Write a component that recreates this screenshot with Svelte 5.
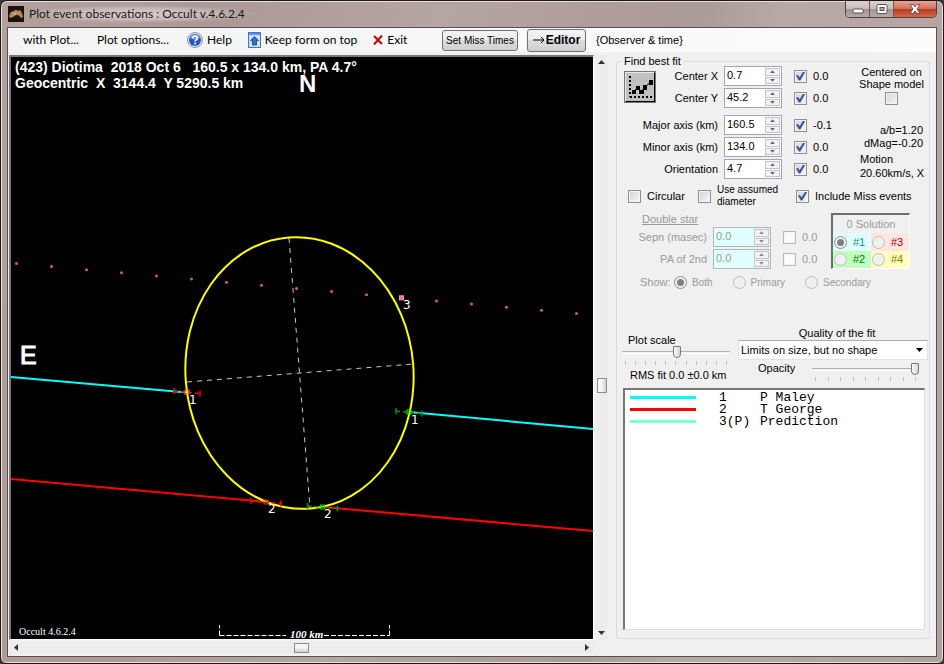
<script lang="ts">
  // Event plot window: sky-plane plot on the left, fit controls and chord list on the right.
  type Param = { id: string; label: string; value: string; fit: string };

  const centre: Param[] = [
    { id: 'cx', label: 'Center X', value: '0.7', fit: '0.0' },
    { id: 'cy', label: 'Center Y', value: '45.2', fit: '0.0' },
  ];
  const shape: Param[] = [
    { id: 'major', label: 'Major axis (km)', value: '160.5', fit: '-0.1' },
    { id: 'minor', label: 'Minor axis (km)', value: '134.0', fit: '0.0' },
    { id: 'orient', label: 'Orientation', value: '4.7', fit: '0.0' },
  ];
  const double: Param[] = [
    { id: 'sepn', label: 'Sepn (masec)', value: '0.0', fit: '0.0' },
    { id: 'pa2', label: 'PA of 2nd', value: '0.0', fit: '0.0' },
  ];

  const chords = [
    { id: '1', name: 'P Maley', color: '#00ffff' },
    { id: '2', name: 'T George', color: '#ff0000' },
    { id: '3(P)', name: 'Prediction', color: '#7fffd4' },
  ];

  // predicted path, one dot per time step
  const dots = Array.from({ length: 17 }, (_, i) => ({ x: 16.5 + 35 * i, y: 263.5 + 3.12 * i }));

  const events = [
    { x: 187, y: 392, half: 13, bar: '#ff0000', box: '#ff7040', label: '1', lx: 189, ly: 404 },
    { x: 266, y: 502, half: 15, bar: '#ff0000', box: '#d04020', label: '2', lx: 268, ly: 513 },
    { x: 409, y: 412, half: 13, bar: '#1a8a1a', box: '#00ff00', label: '1', lx: 411, ly: 424 },
    { x: 322.5, y: 507, half: 15, bar: '#1a8a1a', box: '#00e000', label: '2', lx: 324, ly: 518 },
  ];

  const solutions = ['#1', '#3', '#2', '#4'];
  const shows = ['Both', 'Primary', 'Secondary'];

  let solution = $state('#1');
  let show = $state('Both');
  let plotScale = $state(51);
  let opacity = $state(100);
  let hPos = $state(50);
  let vPos = $state(57);
</script>

{#snippet paramRow(p: Param, disabled: boolean)}
  <label class="name" for={p.id}>{p.label}</label>
  <div class="spinner">
    <input id={p.id} type="text" value={p.value} {disabled} />
    <span class="arrows">
      <button type="button" class="up" aria-label="Increase {p.label}" {disabled}></button>
      <button type="button" class="down" aria-label="Decrease {p.label}" {disabled}></button>
    </span>
  </div>
  <label class="check">
    <input type="checkbox" checked={!disabled} {disabled} />
    <span>{p.fit}</span>
  </label>
{/snippet}

<div class="window">
  <header class="titlebar">
    <svg class="app-icon" viewBox="0 0 16 16" aria-hidden="true">
      <rect width="16" height="16" fill="#1c130e" />
      <path d="M1 10 L3 6 L6 5 L8 3.500 L10 5 L12 4 L14 7 L15 11 L13 12 L11 9.500 L8 9 L5 11 L2 12 Z" fill="#b08a60" />
      <path d="M4 8 L7 6 L9 8 L7 9 Z" fill="#caa67c" />
    </svg>
    <h1>Plot event observations : Occult v.4.6.2.4</h1>
    <div class="caption">
      <button type="button" aria-label="Minimize">
        <svg viewBox="0 0 12 10"><rect x="1" y="5" width="10" height="4" rx="1" fill="#fff" stroke="#555" /></svg>
      </button>
      <button type="button" aria-label="Maximize">
        <svg viewBox="0 0 12 10">
          <rect x="1" y="0.500" width="10" height="9" rx="1" fill="#fff" stroke="#555" />
          <rect x="4" y="3.500" width="4" height="3" fill="#aaa" stroke="#555" />
        </svg>
      </button>
      <button type="button" class="close" aria-label="Close">
        <svg viewBox="0 0 12 10">
          <path d="M1 0.500 H4 L6 3 L8 0.500 H11 L8 5 L11 9.500 H8 L6 7 L4 9.500 H1 L4 5 Z" fill="#fff" stroke="#5b3a3a" stroke-width="0.800" />
        </svg>
      </button>
    </div>
  </header>

  <div class="client">
    <nav class="toolbar">
      <button type="button" class="item">with Plot...</button>
      <button type="button" class="item">Plot options...</button>
      <button type="button" class="item help">
        <svg viewBox="0 0 16 16" width="16" height="16" aria-hidden="true">
          <circle cx="8" cy="8" r="7.500" fill="#dfe3ea" stroke="#8d97a8" />
          <circle cx="8" cy="8" r="6" fill="#2456c4" />
          <path d="M3 6 A5.500 5.500 0 0 1 13 6 Q8 9 3 6" fill="#6f9cf0" />
          <path d="M5.700 6.200 Q5.800 4 8 4 Q10.300 4 10.300 6 Q10.300 7.200 9 8 Q8.100 8.600 8.100 9.600" fill="none" stroke="#fff" stroke-width="1.600" />
          <rect x="7.300" y="10.700" width="1.700" height="1.700" fill="#fff" />
        </svg>
        Help
      </button>
      <button type="button" class="item keep">
        <svg viewBox="0 0 13 16" width="13" height="16" aria-hidden="true">
          <rect x="0.500" y="0.500" width="12" height="15" fill="#cfe2fb" stroke="#3f74c6" />
          <rect x="1" y="1" width="11" height="2" fill="#5b93e8" />
          <path d="M6.500 4.500 L10.500 8.500 H8.500 V13 H4.500 V8.500 H2.500 Z" fill="#2f6fd8" stroke="#1c3f8c" stroke-width="0.800" />
        </svg>
        Keep form on top
      </button>
      <button type="button" class="item exit">
        <svg viewBox="0 0 10 10" width="10" height="10" aria-hidden="true">
          <path d="M1 1 L9 9 M9 0.500 L1 9.500" stroke="#c80000" stroke-width="2" fill="none" />
        </svg>
        Exit
      </button>
      <button type="button" class="push miss">Set Miss Times</button>
      <button type="button" class="push editor">
        <svg viewBox="0 0 12 8" width="12" height="8" aria-hidden="true">
          <path d="M0 4 H11 M8 1 L11 4 L8 7" stroke="#000" fill="none" />
        </svg>Editor
      </button>
      <span class="hint">{'{Observer & time}'}</span>
    </nav>

    <main>
      <section class="plot-area">
        <svg class="plot" viewBox="11 57 582 582" role="img" aria-label="Observed chords and fitted ellipse">
          <g class="head">
            <text x="15" y="72">(423) Diotima  2018 Oct 6   160.5 x 134.0 km, PA 4.7°</text>
            <text x="15" y="88">Geocentric  X  3144.4  Y 5290.5 km</text>
          </g>
          <text class="north" x="299" y="92">N</text>
          <text class="east" x="20" y="364">E</text>

          {#each dots as d, i}
            {#if i === 11}
              <rect x={d.x - 2} y={d.y - 2} width="4" height="4" fill="#ff69b4" stroke="#e0a0d0" />
            {:else}
              <circle cx={d.x} cy={d.y} r="1.500" fill="#d8509a" />
            {/if}
          {/each}
          <text class="tag" x="403" y="309">3</text>

          <g stroke-width="2">
            <path d="M11 377 L187 392.500 M409 412 L593 429" stroke="#00ffff" />
            <path d="M11 479 L267 502 M323 507 L593 531" stroke="#ff0000" />
          </g>

          <g class="axes">
            <path d="M289 238 L310 508" />
            <path d="M187 382 L413 364" />
          </g>
          <ellipse cx="299.500" cy="373" rx="114" ry="136" transform="rotate(-4.7 299.5 373)" />

          {#each events as e}
            <g stroke={e.bar} fill="none">
              <path
                d="M{e.x - e.half} {e.y - 1} L{e.x + e.half} {e.y + 1.5}"
                stroke-dasharray="4 3"
                stroke-width="1.500"
              />
              <path
                d="M{e.x - e.half} {e.y - 4} v6 M{e.x + e.half} {e.y - 1.5} v6"
                stroke-width="1.500"
              />
              <rect x={e.x - 2} y={e.y - 2} width="4" height="4" stroke={e.box} />
            </g>
            <text class="tag" x={e.lx} y={e.ly}>{e.label}</text>
          {/each}

          <text class="version" x="19" y="635">Occult 4.6.2.4</text>
          <path class="bar" d="M219.500 635.500 H286 M324 635.500 H389.500 M219.500 635.500 V625 M389.500 635.500 V625" />
          <text class="km" x="290" y="638">100 km</text>
        </svg>
        <div class="scroll vertical">
          <button type="button" class="tip t-up" aria-label="Scroll up"></button>
          <input type="range" bind:value={vPos} aria-label="Vertical position" />
          <button type="button" class="tip t-down" aria-label="Scroll down"></button>
        </div>
        <div class="scroll horizontal">
          <button type="button" class="tip t-left" aria-label="Scroll left"></button>
          <input type="range" bind:value={hPos} aria-label="Horizontal position" />
          <button type="button" class="tip t-right" aria-label="Scroll right"></button>
        </div>
      </section>

      <fieldset class="panel">
        <legend>Find best fit</legend>

        <div class="fit">
          <div class="params">
            <div class="centre">
              <button type="button" class="fit-button" aria-label="Find best fit">
                <svg viewBox="0 0 28 28" aria-hidden="true">
                  <path d="M4 3 V24" stroke="#000" stroke-width="2" stroke-dasharray="2 2" />
                  <path d="M4 24 H27" stroke="#000" stroke-width="2" stroke-dasharray="2 2" />
                  <path d="M7 19 L11 15 L15 19 L20 13 L25 9" stroke="#000" fill="none" />
                  <path d="M6 17h4v4h-4z M10 13h4v4h-4z M13 17h5v4h-5z M17 12h4v5h-4z M23 7h4v5h-4z" />
                </svg>
              </button>
              <div class="rows">
                {#each centre as p (p.id)}
                  {@render paramRow(p, false)}
                {/each}
              </div>
            </div>
            <div class="rows">
              {#each shape as p (p.id)}
                {@render paramRow(p, false)}
              {/each}
            </div>
          </div>
          <div class="facts">
            <label class="model">
              <span>Centered on<br />Shape model</span>
              <input type="checkbox" />
            </label>
            <p class="ratio">a/b=1.20<br />dMag=-0.20</p>
            <p class="motion">Motion<br />20.60km/s, X</p>
          </div>
        </div>

        <div class="options">
          <label class="check circular"><input type="checkbox" /><span>Circular</span></label>
          <label class="check assumed"><input type="checkbox" /><span>Use assumed<br />diameter</span></label>
          <label class="check"><input type="checkbox" checked /><span>Include Miss events</span></label>
        </div>

        <div class="double">
          <div>
            <h2>Double star</h2>
            <div class="rows">
              {#each double as p (p.id)}
                {@render paramRow(p, true)}
              {/each}
            </div>
          </div>
          <div class="solutions">
            <p>0 Solution</p>
            {#each solutions as s, i}
              <label class="s{i}">
                <input type="radio" name="solution" value={s} bind:group={solution} disabled />{s}
              </label>
            {/each}
          </div>
        </div>

        <div class="show">
          <span>Show:</span>
          {#each shows as s}
            <label><input type="radio" name="show" value={s} bind:group={show} disabled />{s}</label>
          {/each}
        </div>

        <div class="tuning">
          <div class="scale">
            <label for="scale">Plot scale</label>
            <input id="scale" class="slider" type="range" bind:value={plotScale} />
            <div class="ticks">{#each Array(11) as _}<i></i>{/each}</div>
            <p>RMS fit 0.0 ±0.0 km</p>
          </div>
          <div class="quality">
            <label for="quality">Quality of the fit</label>
            <div class="select">
              <select id="quality">
                <option>Limits on size, but no shape</option>
              </select>
            </div>
            <div class="opacity">
              <label for="opacity">Opacity</label>
              <div>
                <input id="opacity" class="slider" type="range" bind:value={opacity} />
                <div class="ticks">{#each Array(9) as _}<i></i>{/each}</div>
              </div>
            </div>
          </div>
        </div>

        <div class="list">
          <table>
            <tbody>
              {#each chords as c (c.id)}
                <tr>
                  <td class="swatch"><i style="background: {c.color}"></i></td>
                  <td class="num">{c.id}</td>
                  <td>{c.name}</td>
                </tr>
              {/each}
            </tbody>
          </table>
        </div>
      </fieldset>
    </main>
  </div>
</div>

<style>
  :global(body) {
    margin: 0;
    background: #3a3a3a;
  }
  * {
    box-sizing: border-box;
  }
  button,
  input,
  select {
    margin: 0;
    padding: 0;
    font: inherit;
    color: inherit;
  }
  p,
  h1,
  h2 {
    margin: 0;
    font-weight: 400;
  }

  .window {
    display: flex;
    flex-direction: column;
    min-height: 100vh;
    padding: 0 6px 6px;
    border: 1px solid #1d1718;
    border-radius: 7px 7px 6px 6px;
    background: linear-gradient(100deg, #b3a19e 0%, #ab9996 20%, #b6a6a3 42%, #ad9c99 60%, #ab9b98 66%, #b9a9a6 74%, #b3a3a0 100%);
    box-shadow: inset 0 0 0 1px #e9e0df;
    font: 11px/13px 'Liberation Sans', Arial, sans-serif;
    color: #000;
  }
  .titlebar {
    display: flex;
    align-items: center;
    height: 26px;
    padding-left: 1px;
  }
  .app-icon {
    width: 16px;
    height: 16px;
  }
  .titlebar h1 {
    padding: 0 12px 0 5px;
    background: radial-gradient(closest-side, rgba(255, 255, 255, 0.5), rgba(255, 255, 255, 0.3) 60%, transparent);
    font: 12px/18px Lato, 'Open Sans', sans-serif;
    color: #1c1414;
  }
  .caption {
    display: flex;
    align-self: flex-start;
    margin-left: auto;
    border: 1px solid #4b3f40;
    border-top: 0;
    border-radius: 0 0 5px 5px;
    overflow: hidden;
  }
  .caption button {
    display: grid;
    place-items: center;
    width: 24px;
    height: 16px;
    border: 0;
    border-right: 1px solid #6b5c5c;
    background: linear-gradient(#dcd2d1, #c9bdbb 48%, #a39290 50%, #b8a9a7);
  }
  .caption .close {
    width: 42px;
    border-right: 0;
    background: linear-gradient(#e6a596, #d0705c 48%, #b93a22 50%, #d4684a);
  }
  .caption svg {
    width: 12px;
    height: 10px;
  }

  .client {
    flex: 1;
    display: flex;
    flex-direction: column;
    border: 1px solid #5c4e4e;
    background: #f0f0f0;
  }
  .toolbar {
    display: flex;
    align-items: center;
    height: 24px;
    padding-left: 15px;
    background: linear-gradient(90deg, #f3f3f3, #fcfcfc);
  }
  .item {
    display: flex;
    align-items: center;
    gap: 4px;
    margin-right: 18px;
    border: 0;
    background: none;
    font: 12px/18px Lato, 'Open Sans', sans-serif;
    white-space: nowrap;
  }
  .item.help,
  .item.keep {
    margin-right: 16px;
  }
  .item.exit {
    margin-right: auto;
  }
  .push {
    border: 1px solid #707070;
    border-radius: 3px;
    background: linear-gradient(#f4f4f4, #ebebeb 48%, #dcdcdc 50%, #cfcfcf);
    white-space: nowrap;
  }
  .miss {
    width: 76px;
    height: 21px;
    margin-right: 9px;
    font-size: 10px;
  }
  .editor {
    display: flex;
    align-items: center;
    justify-content: center;
    gap: 1px;
    width: 59px;
    height: 23px;
    font-size: 12px;
    font-weight: 700;
  }
  .hint {
    width: 350px;
    padding-left: 10px;
  }

  main {
    flex: 1;
    display: flex;
    gap: 9px;
    padding: 3px 6px 3px 1px;
  }
  .plot-area {
    flex: 1;
    display: grid;
    grid-template-columns: minmax(0, 1fr) 11px;
    grid-template-rows: auto 11px;
    gap: 2px;
    align-content: start;
  }
  .plot {
    display: block;
    width: 100%;
    border: 2px solid #777;
    border-right: 1px solid #fff;
    border-bottom: 1px solid #fff;
    background: #000;
  }
  .plot text {
    fill: #fff;
    white-space: pre;
  }
  .head {
    font: 700 14px 'Liberation Sans', Arial, sans-serif;
  }
  .north {
    font: 700 24px 'Liberation Sans', Arial, sans-serif;
  }
  .east {
    font: 25px 'Liberation Sans', Arial, sans-serif;
    stroke: #fff;
  }
  .tag {
    font: 12px 'DejaVu Sans', sans-serif;
  }
  .version {
    font: 10px 'Liberation Serif', serif;
  }
  .km {
    font: italic 700 11px 'Liberation Serif', serif;
  }
  .bar {
    fill: none;
    stroke: #fff;
    stroke-dasharray: 5 2;
  }
  .axes {
    fill: none;
    stroke: #d8ce86;
    stroke-dasharray: 5 5;
  }
  ellipse {
    fill: none;
    stroke: #ffff00;
    stroke-width: 2;
  }

  .scroll {
    display: flex;
    background: #ececec;
  }
  .scroll.vertical {
    flex-direction: column;
  }
  .scroll input {
    flex: 1;
    min-width: 0;
    min-height: 0;
    appearance: none;
    background: transparent;
  }
  .vertical input {
    width: 11px;
    writing-mode: vertical-lr;
  }
  .scroll input::-webkit-slider-thumb {
    appearance: none;
    width: 15px;
    height: 10px;
    border: 1px solid #8e8e8e;
    background: linear-gradient(#f6f6f6 45%, #cfcfd2);
  }
  .vertical input::-webkit-slider-thumb {
    width: 10px;
    height: 15px;
    background: linear-gradient(90deg, #f6f6f6 45%, #cfcfd2);
  }
  .tip {
    display: grid;
    place-items: center;
    width: 11px;
    height: 14px;
    border: 0;
    background: none;
  }
  .horizontal .tip {
    width: 14px;
    height: 11px;
  }
  .tip::before {
    content: '';
    width: 7px;
    height: 4px;
    background: #333;
  }
  .t-up::before {
    clip-path: polygon(50% 0, 100% 100%, 0 100%);
  }
  .t-down::before {
    clip-path: polygon(0 0, 100% 0, 50% 100%);
  }
  .t-left::before,
  .t-right::before {
    width: 4px;
    height: 7px;
  }
  .t-left::before {
    clip-path: polygon(100% 0, 100% 100%, 0 50%);
  }
  .t-right::before {
    clip-path: polygon(0 0, 100% 50%, 0 100%);
  }

  .panel {
    display: flex;
    flex-direction: column;
    width: 314px;
    min-width: 0;
    margin: 1px 0 14px;
    padding: 0 0 8px;
    border: 1px solid #d3dde6;
    border-radius: 3px;
  }
  legend {
    margin-left: 5px;
    padding: 0 2px;
    line-height: 10px;
  }
  .fit {
    display: flex;
    justify-content: space-between;
    padding: 0 6px 0 7px;
  }
  .rows {
    display: grid;
    grid-template-columns: 94px 58px auto;
    grid-auto-rows: 20px;
    align-items: center;
    justify-content: start;
    column-gap: 6px;
    row-gap: 2px;
  }
  .params > .rows {
    margin-top: 7px;
  }
  .name {
    text-align: right;
    white-space: nowrap;
  }
  /* the icon button shares one cell with the label column beside it */
  .centre {
    display: grid;
  }
  .centre > * {
    grid-area: 1 / 1;
  }
  .fit-button {
    z-index: 1;
    align-self: center;
    width: 32px;
    height: 32px;
    border: 2px outset #e8e8e8;
    border-right-color: #555;
    border-bottom-color: #555;
    background: #c0c0c0;
    outline: 1px solid #777;
    outline-offset: -1px;
  }
  .fit-button svg {
    display: block;
    width: 28px;
    height: 28px;
  }
  .spinner {
    display: flex;
    height: 20px;
    border: 1px solid #a3a7ad;
    background: #fff;
  }
  .spinner input {
    width: 40px;
    height: 16px;
    padding-left: 2px;
    border: 0;
    background: transparent;
  }
  .arrows {
    display: grid;
    gap: 1px;
    width: 15px;
    margin: 1px 1px 1px auto;
  }
  .arrows button {
    display: grid;
    place-items: center;
    border: 1px solid #c4c4c8;
    background: #f2f2f2;
  }
  .arrows button::before {
    content: '';
    width: 5px;
    height: 3px;
    background: #4c5f9e;
    clip-path: polygon(50% 0, 100% 100%, 0 100%);
  }
  .arrows .down::before {
    clip-path: polygon(0 0, 100% 0, 50% 100%);
  }
  .check {
    display: flex;
    align-items: center;
    gap: 6px;
    white-space: nowrap;
  }
  .rows .check {
    padding-left: 6px;
  }
  input[type='checkbox'] {
    appearance: none;
    flex: none;
    display: grid;
    place-items: center;
    width: 13px;
    height: 13px;
    border: 1px solid #8e8f8f;
    background: linear-gradient(135deg, #cfd3d8, #f6f6f6);
    box-shadow: inset 0 0 0 1px #f4f4f4;
  }
  input[type='checkbox']:checked::before {
    content: '';
    width: 9px;
    height: 9px;
    background: #3c549a;
    clip-path: polygon(0 45%, 22% 38%, 40% 65%, 80% 0, 100% 8%, 48% 100%, 32% 100%);
  }
  .facts {
    display: flex;
    flex-direction: column;
    width: 63px;
    white-space: nowrap;
  }
  .model {
    display: flex;
    flex-direction: column;
    align-items: center;
    gap: 2px;
    line-height: 12px;
    text-align: center;
  }
  .ratio {
    margin-top: 19px;
    text-align: right;
  }
  .motion {
    margin-top: 2px;
    line-height: 14px;
  }

  .options {
    display: flex;
    height: 24px;
    margin-top: 4px;
    padding-left: 11px;
  }
  .circular {
    width: 70px;
  }
  .assumed {
    width: 98px;
    font-size: 10px;
    line-height: 12px;
  }

  .double {
    display: flex;
    justify-content: space-between;
    margin-top: 5px;
    padding-right: 19px;
    color: #9a9a9a;
  }
  h2 {
    margin-bottom: 2px;
    padding-left: 25px;
    font-size: 11px;
    line-height: 12px;
    text-decoration: underline;
  }
  .double .rows {
    grid-template-columns: 90px 58px auto;
  }
  .double .spinner {
    border-color: #b4b4b4;
    background: linear-gradient(90deg, #e0ffff 42px, #f0f0f0 42px);
  }
  .double .arrows button::before {
    background: #888;
  }
  .double input[type='checkbox'] {
    border-color: #b8b8b8;
    background: #fbfbfb;
  }
  .solutions {
    display: grid;
    grid-template-columns: 1fr 1fr;
    grid-template-rows: 1fr 18px 17px;
    width: 79px;
    height: 56px;
    border: 2px solid #6d6d6d;
    border-right: 1px solid #fff;
    border-bottom: 1px solid #fff;
  }
  .solutions p {
    grid-column: 1 / 3;
    align-self: center;
    text-align: center;
  }
  .solutions label {
    display: flex;
    align-items: center;
    gap: 6px;
    padding-left: 1px;
  }
  .s0 {
    background: #e0ffff;
    color: #009a9a;
  }
  .s1 {
    background: #ffe4e1;
    color: #b00000;
  }
  .s2 {
    background: #c0ffc0;
    color: #008000;
  }
  .s3 {
    background: #ffffc0;
    color: #808000;
  }
  input[type='radio'] {
    appearance: none;
    flex: none;
    display: grid;
    place-items: center;
    width: 13px;
    height: 13px;
    border: 1px solid #bcbcbc;
    border-radius: 50%;
    background: #f0f0f0;
  }
  input[type='radio']:checked {
    border-color: #8c8c8c;
  }
  input[type='radio']:checked::before {
    content: '';
    width: 7px;
    height: 7px;
    border-radius: 50%;
    background: #808080;
  }

  .show {
    display: flex;
    align-items: center;
    height: 14px;
    margin-top: 6px;
    padding-left: 23px;
    color: #9a9a9a;
  }
  .show label {
    display: flex;
    align-items: center;
    gap: 5px;
    margin-right: 20px;
    font-size: 10px;
  }
  .show span {
    width: 34px;
  }

  .tuning {
    display: flex;
    gap: 8px;
    margin-top: 38px;
    padding: 0 1px 0 5px;
  }
  .scale {
    display: flex;
    flex-direction: column;
    width: 108px;
    padding-top: 7px;
  }
  .scale label {
    padding-left: 6px;
    line-height: 12px;
  }
  .scale p {
    margin-top: 4px;
    padding-left: 8px;
    white-space: nowrap;
  }
  .slider {
    appearance: none;
    display: block;
    width: 100%;
    height: 12px;
    background: linear-gradient(#b0b0b0, #b0b0b0) 0 5px / 100% 1px no-repeat, linear-gradient(#fff, #fff) 0 7px / 100% 1px no-repeat;
  }
  .slider::-webkit-slider-thumb {
    appearance: none;
    width: 8px;
    height: 12px;
    border: 1px solid #777;
    border-radius: 1px 1px 4px 4px;
    background: linear-gradient(90deg, #fafafa, #d6d6d6);
  }
  .ticks {
    display: flex;
    justify-content: space-between;
    margin-top: 3px;
    padding: 0 3px;
  }
  .ticks i {
    width: 1px;
    height: 4px;
    background: #bdbdbd;
  }
  .quality {
    flex: 1;
    display: flex;
    flex-direction: column;
  }
  .quality > label {
    padding-left: 8px;
    text-align: center;
  }
  .select {
    position: relative;
    height: 20px;
    border: 1px solid #dfe3e8;
    border-top-color: #a8acb4;
    background: #fff;
  }
  .select select {
    appearance: none;
    display: block;
    width: 100%;
    height: 18px;
    padding-left: 2px;
    border: 0;
    background: transparent;
  }
  .select::after {
    content: '';
    position: absolute;
    top: 7px;
    right: 4px;
    width: 7px;
    height: 4px;
    background: #000;
    clip-path: polygon(0 0, 100% 0, 50% 100%);
    pointer-events: none;
  }
  .opacity {
    display: grid;
    grid-template-columns: 54px 1fr;
    margin-top: 2px;
    padding: 0 9px 0 20px;
  }
  .opacity > div {
    padding-top: 1px;
  }
  .opacity .ticks {
    margin-top: 2px;
  }

  .list {
    flex: 1;
    min-height: 100px;
    margin: 6px 4px 0 6px;
    padding: 2px 5px;
    border: 2px solid #777;
    border-right: 1px solid #ddd;
    border-bottom: 1px solid #ddd;
    background: #fff;
  }
  table {
    border-collapse: collapse;
    font: 13px/12px 'Liberation Mono', 'Courier New', monospace;
  }
  td {
    height: 12px;
    padding: 0;
  }
  .swatch {
    width: 89px;
    vertical-align: top;
  }
  .swatch i {
    display: block;
    width: 66px;
    height: 3px;
    margin-top: 4px;
  }
  .num {
    width: 41px;
  }
</style>
